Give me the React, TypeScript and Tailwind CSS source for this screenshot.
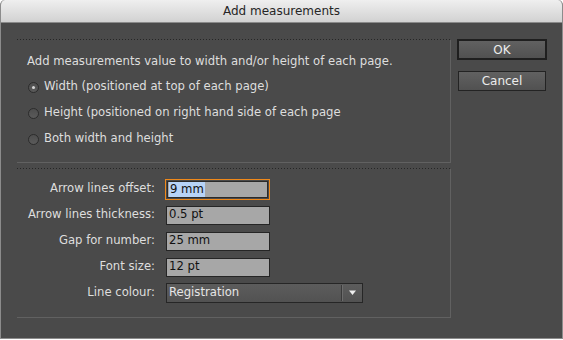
import React from "react";

const font = { fontFamily: '"DejaVu Sans", Verdana, sans-serif' };

const Dotted = () => (
  <div className="h-px w-full bg-[repeating-linear-gradient(to_right,#262626_0_1px,transparent_1px_3px)]" />
);

const Radio = ({ checked, label }: { checked?: boolean; label: string }) => (
  <div className="flex items-center h-[14px]">
    <span className="flex items-center justify-center w-[11px] h-[11px] rounded-full border border-[#2c2c2c] bg-gradient-to-b from-[#4e4e4e] to-[#5a5a5a] ml-[1px]">
      {checked && <span className="w-[3px] h-[3px] rounded-full bg-[#d6d6d6]" />}
    </span>
    <span className="ml-[5px]">{label}</span>
  </div>
);

const Field = ({ label, value, focused }: { label: string; value: string; focused?: boolean }) => (
  <div className="flex items-center h-[20px]">
    <span className="w-[139px] text-right pr-[1px]">{label}</span>
    <div
      className={
        focused
          ? "ml-[9px] w-[105px] h-[21px] border border-[#f0891a] p-px"
          : "ml-[10px] w-[104px] h-[19px] border border-[#252525] bg-[#a7a7a7] flex items-center"
      }
    >
      {focused ? (
        <div className="w-full h-full border border-[#2a2a2a] bg-[#a7a7a7] flex items-center">
          <span className="ml-[1px] px-[1px] bg-[#b7d3f7] text-[#111] leading-[15px]">{value}</span>
        </div>
      ) : (
        <span className="ml-[2px] text-[#111]">{value}</span>
      )}
    </div>
  </div>
);

export default function App() {
  return (
    <div className="w-[563px] h-[340px] bg-white" style={font}>
      <div className="w-[563px] h-[339px] flex flex-col rounded-t-[5px] overflow-hidden border-x border-b border-[#8c8c8c] bg-[#4a4a4a] text-[11.65px] text-[#dedede]">
        <div className="h-[23px] shrink-0 flex items-center justify-center bg-gradient-to-b from-[#efefef] to-[#d2d2d2] border-b border-[#8a8a8a] text-[12px] text-[#262626]">
          Add measurements
        </div>
        <div className="flex pl-[16px] pt-[16px]">
          <div className="w-[434px] flex flex-col">
            <Dotted />
            <div className="h-[123px] border-r border-b border-[#616161] pl-[10px] pt-[15px] flex flex-col">
              <div className="h-[14px] flex items-center">Add measurements value to width and/or height of each page.</div>
              <div className="mt-[11px] flex flex-col gap-[12px]">
                <Radio checked label="Width (positioned at top of each page)" />
                <Radio label="Height (positioned on right hand side of each page" />
                <Radio label="Both width and height" />
              </div>
            </div>
            <div className="mt-[5px]">
              <Dotted />
            </div>
            <div className="h-[149px] border-r border-b border-[#616161] pt-[10px] flex flex-col gap-[6px]">
              <Field label="Arrow lines offset:" value="9 mm" focused />
              <Field label="Arrow lines thickness:" value="0.5 pt" />
              <Field label="Gap for number:" value="25 mm" />
              <Field label="Font size:" value="12 pt" />
              <div className="flex items-center h-[20px]">
                <span className="w-[139px] text-right pr-[1px]">Line colour:</span>
                <div className="ml-[10px] w-[197px] h-[20px] border border-[#262626] bg-gradient-to-b from-[#5c5c5c] to-[#525252] flex items-center">
                  <span className="ml-[2px] flex-1 text-[#e6e6e6]">Registration</span>
                  <span className="w-px h-[16px] bg-[#3a3a3a]" />
                  <span className="w-px h-[16px] bg-[#6c6c6c]" />
                  <svg width="19" height="10" viewBox="0 0 19 10" className="shrink-0">
                    <path d="M6 2.5 L13 2.5 L9.5 7 Z" fill="#eeeeee" />
                  </svg>
                </div>
              </div>
            </div>
          </div>
          <div className="ml-[6px] flex flex-col">
            <button className="w-[90px] h-[21px] border-2 border-[#1f1f1f] bg-gradient-to-b from-[#616161] to-[#515151] text-[12px] text-[#ececec] leading-none">
              OK
            </button>
            <button className="mt-[11px] ml-px w-[88px] h-[20px] border border-[#232323] bg-gradient-to-b from-[#616161] to-[#515151] text-[12px] text-[#ececec] leading-none">
              Cancel
            </button>
          </div>
        </div>
      </div>
    </div>
  );
}
